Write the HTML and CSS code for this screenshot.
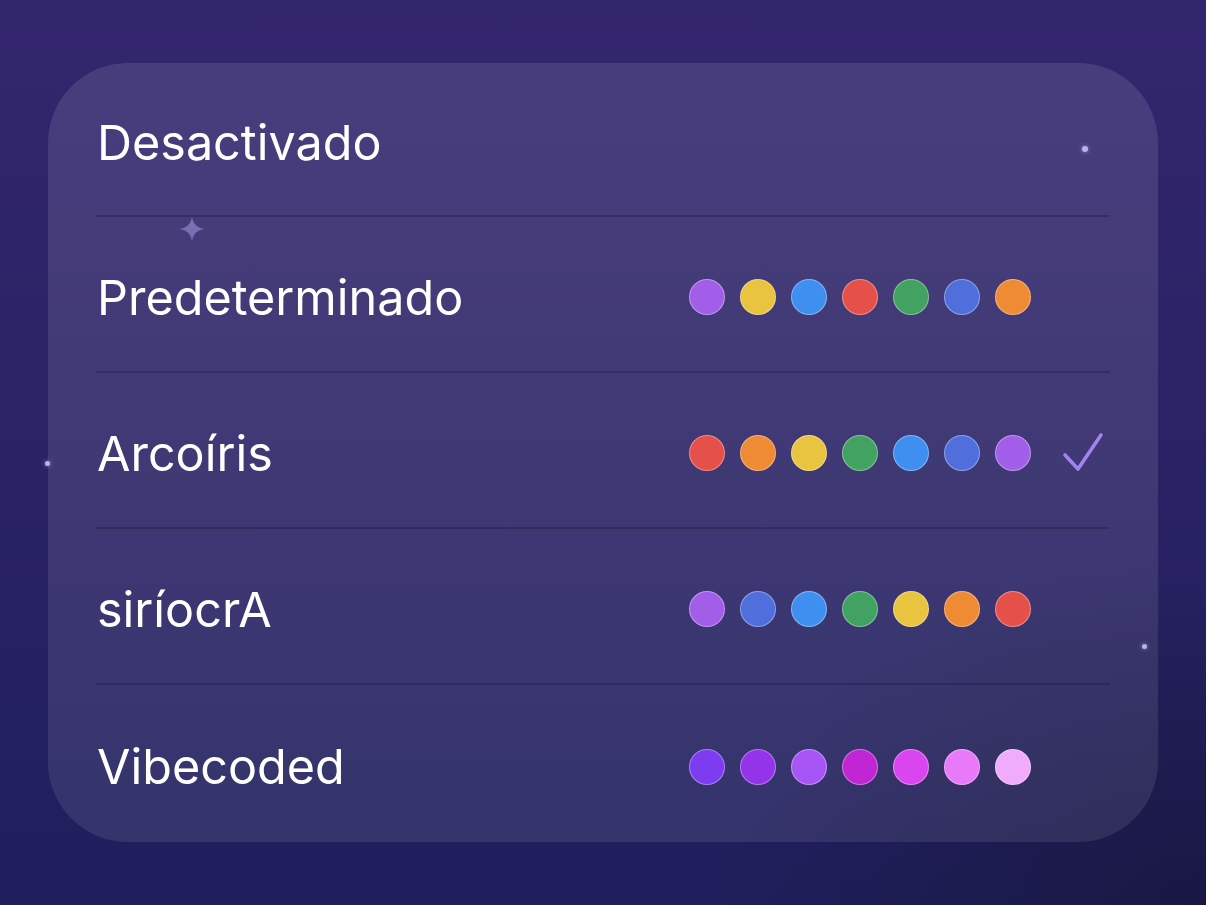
FILE: index.html
```html
<!DOCTYPE html>
<html lang="es">
<head>
<meta charset="utf-8">
<link rel="stylesheet" href="styles.css">
</head>
<body>
<div class="bg">
  <span class="spark star"><svg viewBox="0 0 30 30" width="30" height="30"><path d="M15 2 Q16.2 13.8 28 15 Q16.2 16.2 15 28 Q13.8 16.2 2 15 Q13.8 13.8 15 2Z" fill="#8a80c4" opacity="0.75"/></svg></span>
  <span class="spark d1"></span>
  <span class="spark d2"></span>
  <span class="spark d3"></span>
  <div class="card">
    <div class="row first"><span class="label">Desactivado</span></div>
    <div class="row">
      <span class="label">Predeterminado</span>
      <div class="dots">
        <i class="dot c-purple"></i><i class="dot c-yellow"></i><i class="dot c-blue"></i><i class="dot c-red"></i><i class="dot c-green"></i><i class="dot c-indigo"></i><i class="dot c-orange"></i>
      </div>
      <span class="check"></span>
    </div>
    <div class="row">
      <span class="label">Arcoíris</span>
      <div class="dots">
        <i class="dot c-red"></i><i class="dot c-orange"></i><i class="dot c-yellow"></i><i class="dot c-green"></i><i class="dot c-blue"></i><i class="dot c-indigo"></i><i class="dot c-purple"></i>
      </div>
      <span class="check"><svg viewBox="0 0 44 44" width="44" height="44"><path d="M4 24 L17 38 L40 4" fill="none" stroke="#a383ef" stroke-width="3.6" stroke-linecap="round" stroke-linejoin="round"/></svg></span>
    </div>
    <div class="row">
      <span class="label">siríocrA</span>
      <div class="dots">
        <i class="dot c-purple"></i><i class="dot c-indigo"></i><i class="dot c-blue"></i><i class="dot c-green"></i><i class="dot c-yellow"></i><i class="dot c-orange"></i><i class="dot c-red"></i>
      </div>
      <span class="check"></span>
    </div>
    <div class="row last">
      <span class="label">Vibecoded</span>
      <div class="dots">
        <i class="dot v1"></i><i class="dot v2"></i><i class="dot v3"></i><i class="dot v4"></i><i class="dot v5"></i><i class="dot v6"></i><i class="dot v7"></i>
      </div>
      <span class="check"></span>
    </div>
  </div>
</div>
</body>
</html>
```
FILE: styles.css
```css
html, body {
  margin: 0;
  padding: 0;
  width: 1206px;
  height: 905px;
  overflow: hidden;
}
.bg {
  position: relative;
  width: 1206px;
  height: 905px;
  box-sizing: border-box;
  padding: 63px 48px 0 48px;
  background:
    radial-gradient(ellipse 700px 500px at 1206px 905px, rgba(20,18,45,0.55), rgba(20,18,45,0) 70%),
    linear-gradient(180deg, #33266e 0%, #2b2366 45%, #1f1f5d 100%);
  font-family: "Inter", "Liberation Sans", sans-serif;
}
.card {
  width: 1110px;
  height: 779px;
  border-radius: 80px;
  background:
    linear-gradient(180deg, rgba(255,255,255,0.11) 0%, rgba(255,255,255,0.09) 100%);
  box-sizing: border-box;
  padding: 0 48px;
  display: flex;
  flex-direction: column;
}
.row {
  height: 156px;
  box-sizing: border-box;
  display: flex;
  align-items: center;
  border-bottom: 2px solid rgba(30,25,60,0.35);
  padding-left: 1px;
  padding-top: 6px;
}
.row.first { height: 154px; }
.row.last { height: 157px; border-bottom: none; }
.label {
  flex: 1;
  color: #ffffff;
  font-size: 48.5px;
  font-weight: 400;
  letter-spacing: 0;
}
.dots {
  display: flex;
  gap: 15px;
}
.dot {
  display: block;
  width: 36px;
  height: 36px;
  border-radius: 50%;
  box-sizing: border-box;
  border: 1.5px solid rgba(255,255,255,0.35);
}
.check {
  width: 44px;
  height: 44px;
  margin-left: 30px;
  margin-right: 5px;
  display: flex;
}
.c-purple { background: #a25ee9; }
.c-yellow { background: #e8c441; }
.c-blue { background: #3f8ff1; }
.c-red { background: #e5514a; }
.c-green { background: #42a262; }
.c-indigo { background: #506fdc; }
.c-orange { background: #f08b35; }
.v1 { background: #7d3cf0; }
.v2 { background: #9333ea; }
.v3 { background: #a855f7; }
.v4 { background: #c026d3; }
.v5 { background: #d946ef; }
.v6 { background: #e879f9; }
.v7 { background: #f0abfc; }
.spark {
  position: absolute;
  display: block;
}
.star { left: 177px; top: 214px; width: 30px; height: 30px; }
.d1, .d2, .d3 {
  width: 6px;
  height: 6px;
  border-radius: 50%;
  background: #b9b3e6;
  box-shadow: 0 0 4px rgba(200,195,255,0.6);
}
.d1 { left: 1082px; top: 146px; }
.d2 { left: 45px; top: 461px; width: 5px; height: 5px; }
.d3 { left: 1142px; top: 644px; width: 5px; height: 5px; }
```
